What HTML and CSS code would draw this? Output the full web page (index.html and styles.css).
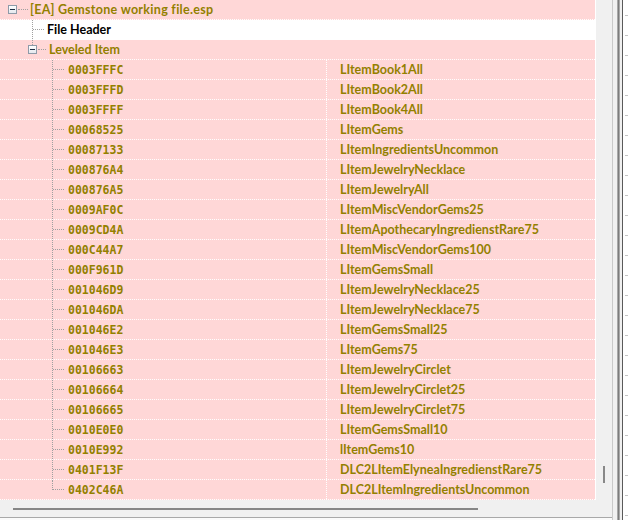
FILE: index.html
```html
<!DOCTYPE html>
<html lang="en">
<head>
  <meta charset="UTF-8">
  <title>Gemstone working file.esp</title>
  <link rel="stylesheet" href="styles.css">
</head>
<body>

  <div class="window">
    <div class="main">
      <div class="view">
        <div class="tree">

          <div class="row full">
            <span class="toggle"></span>
            <span class="stub"></span>
            <span class="label root">[EA] Gemstone working file.esp</span>
          </div>

          <div class="row full plain">
            <span class="branch lvl1"></span>
            <span class="label">File Header</span>
          </div>

          <div class="row full">
            <span class="toggle child"></span>
            <span class="stub short"></span>
            <span class="label">Leveled Item</span>
          </div>

          <div class="row">
            <div class="cell-id"><span class="branch"></span><span class="id">0003FFFC</span></div>
            <div class="cell-name">LItemBook1All</div>
          </div>
          <div class="row">
            <div class="cell-id"><span class="branch"></span><span class="id">0003FFFD</span></div>
            <div class="cell-name">LItemBook2All</div>
          </div>
          <div class="row">
            <div class="cell-id"><span class="branch"></span><span class="id">0003FFFF</span></div>
            <div class="cell-name">LItemBook4All</div>
          </div>
          <div class="row">
            <div class="cell-id"><span class="branch"></span><span class="id">00068525</span></div>
            <div class="cell-name">LItemGems</div>
          </div>
          <div class="row">
            <div class="cell-id"><span class="branch"></span><span class="id">00087133</span></div>
            <div class="cell-name">LItemIngredientsUncommon</div>
          </div>
          <div class="row">
            <div class="cell-id"><span class="branch"></span><span class="id">000876A4</span></div>
            <div class="cell-name">LItemJewelryNecklace</div>
          </div>
          <div class="row">
            <div class="cell-id"><span class="branch"></span><span class="id">000876A5</span></div>
            <div class="cell-name">LItemJewelryAll</div>
          </div>
          <div class="row">
            <div class="cell-id"><span class="branch"></span><span class="id">0009AF0C</span></div>
            <div class="cell-name">LItemMiscVendorGems25</div>
          </div>
          <div class="row">
            <div class="cell-id"><span class="branch"></span><span class="id">0009CD4A</span></div>
            <div class="cell-name">LItemApothecaryIngredienstRare75</div>
          </div>
          <div class="row">
            <div class="cell-id"><span class="branch"></span><span class="id">000C44A7</span></div>
            <div class="cell-name">LItemMiscVendorGems100</div>
          </div>
          <div class="row">
            <div class="cell-id"><span class="branch"></span><span class="id">000F961D</span></div>
            <div class="cell-name">LItemGemsSmall</div>
          </div>
          <div class="row">
            <div class="cell-id"><span class="branch"></span><span class="id">001046D9</span></div>
            <div class="cell-name">LItemJewelryNecklace25</div>
          </div>
          <div class="row">
            <div class="cell-id"><span class="branch"></span><span class="id">001046DA</span></div>
            <div class="cell-name">LItemJewelryNecklace75</div>
          </div>
          <div class="row">
            <div class="cell-id"><span class="branch"></span><span class="id">001046E2</span></div>
            <div class="cell-name">LItemGemsSmall25</div>
          </div>
          <div class="row">
            <div class="cell-id"><span class="branch"></span><span class="id">001046E3</span></div>
            <div class="cell-name">LItemGems75</div>
          </div>
          <div class="row">
            <div class="cell-id"><span class="branch"></span><span class="id">00106663</span></div>
            <div class="cell-name">LItemJewelryCirclet</div>
          </div>
          <div class="row">
            <div class="cell-id"><span class="branch"></span><span class="id">00106664</span></div>
            <div class="cell-name">LItemJewelryCirclet25</div>
          </div>
          <div class="row">
            <div class="cell-id"><span class="branch"></span><span class="id">00106665</span></div>
            <div class="cell-name">LItemJewelryCirclet75</div>
          </div>
          <div class="row">
            <div class="cell-id"><span class="branch"></span><span class="id">0010E0E0</span></div>
            <div class="cell-name">LItemGemsSmall10</div>
          </div>
          <div class="row">
            <div class="cell-id"><span class="branch"></span><span class="id">0010E992</span></div>
            <div class="cell-name">lItemGems10</div>
          </div>
          <div class="row">
            <div class="cell-id"><span class="branch"></span><span class="id">0401F13F</span></div>
            <div class="cell-name">DLC2LItemElyneaIngredienstRare75</div>
          </div>
          <div class="row">
            <div class="cell-id"><span class="branch last"></span><span class="id">0402C46A</span></div>
            <div class="cell-name">DLC2LItemIngredientsUncommon</div>
          </div>

        </div>
        <div class="vscroll">
          <div class="vthumb"></div>
        </div>
      </div>
      <div class="hscroll">
        <div class="hthumb"></div>
      </div>
    </div>
    <div class="edge"></div>
  </div>

</body>
</html>
```

FILE: styles.css
```css
html, body {
  margin: 0;
  padding: 0;
}

body {
  font-family: 'Lato', 'Segoe UI', sans-serif;
  background: #f0f0f0;
}

.window {
  display: flex;
  width: 628px;
  height: 520px;
  overflow: hidden;
}

.main {
  width: 612px;
  display: flex;
  flex-direction: column;
}

.view {
  display: flex;
  height: 500px;
}

.tree {
  width: 596px;
  box-sizing: border-box;
  border-right: 1px solid #fff;
  background: #fff;
}

.row {
  display: flex;
  height: 20px;
  box-sizing: border-box;
  background: #ffd7d7;
  border-bottom: 1px dotted #fff;
  color: #938000;
  font-weight: bold;
  font-size: 12.5px;
}

.row.full {
  align-items: center;
}

.row.plain {
  background: #fff;
  color: #000;
}

.label {
  white-space: nowrap;
  line-height: 19px;
  margin-left: 2px;
}

.label.root {
  letter-spacing: 0.3px;
}

/* tree expand boxes and guide lines */
.toggle {
  position: relative;
  flex: none;
  width: 9px;
  height: 9px;
  box-sizing: border-box;
  margin-left: 8px;
  border: 1px solid #8e9aa8;
  background: linear-gradient(#fff, #e4e8ee);
  display: flex;
  align-items: center;
  justify-content: center;
}

.toggle::before {
  content: '';
  width: 5px;
  height: 1px;
  background: #1e2e44;
}

.toggle.child {
  margin-left: 28px;
}

.toggle.child::after {
  content: '';
  position: absolute;
  left: 3px;
  top: -6px;
  height: 5px;
  border-left: 1px dotted #a0a0a0;
}

.stub {
  width: 10px;
  margin-left: 1px;
  border-top: 1px dotted #a0a0a0;
}

.stub.short {
  width: 8px;
  margin-right: 1px;
}

.branch {
  flex: none;
  align-self: stretch;
  width: 11px;
  margin-left: 52px;
  margin-right: 2px;
  border-left: 1px dotted #a0a0a0;
}

.branch::before {
  content: '';
  display: block;
  height: 9px;
  border-bottom: 1px dotted #a0a0a0;
}

.branch.lvl1 {
  margin-left: 32px;
  margin-right: 1px;
}

.branch.last {
  align-self: flex-start;
  height: 10px;
}

.cell-id {
  width: 327px;
  flex: none;
  display: flex;
  box-sizing: border-box;
  border-right: 1px dotted #fff;
}

.id {
  font-family: 'DejaVu Sans Mono', monospace;
  font-size: 11.5px;
  line-height: 20px;
  margin-left: 2px;
}

.cell-name {
  padding-left: 13px;
  line-height: 20px;
  white-space: nowrap;
}

/* scrollbars */
.vscroll {
  width: 16px;
  padding-top: 466px;
  box-sizing: border-box;
}

.vthumb {
  width: 2px;
  height: 17px;
  margin-left: 7px;
  background: #888;
}

.hscroll {
  height: 20px;
  box-sizing: border-box;
  padding-top: 8px;
  border-bottom: 3px solid #fafafa;
}

.hscroll::after {
  content: '';
  display: block;
  margin-top: 7px;
  height: 1px;
  background: #a8a8a8;
}

.hthumb {
  width: 465px;
  height: 2px;
  margin-left: 13px;
  background: #868686;
}

.edge {
  width: 16px;
  background:
    repeating-linear-gradient(to bottom, transparent 0 15px, #c4c4c4 15px 16px, transparent 16px 20px) 13px 0 / 3px 100% no-repeat,
    linear-gradient(to right,
      #c9c9c9 0 1px,
      #f0f0f0 1px 5px,
      #a8a8a8 5px 6px,
      #7c7c7c 6px 7px,
      #a8a8a8 7px 8px,
      #f0f0f0 8px 10px,
      #5a5a5a 10px 11px,
      #fff 11px 16px);
}
```
